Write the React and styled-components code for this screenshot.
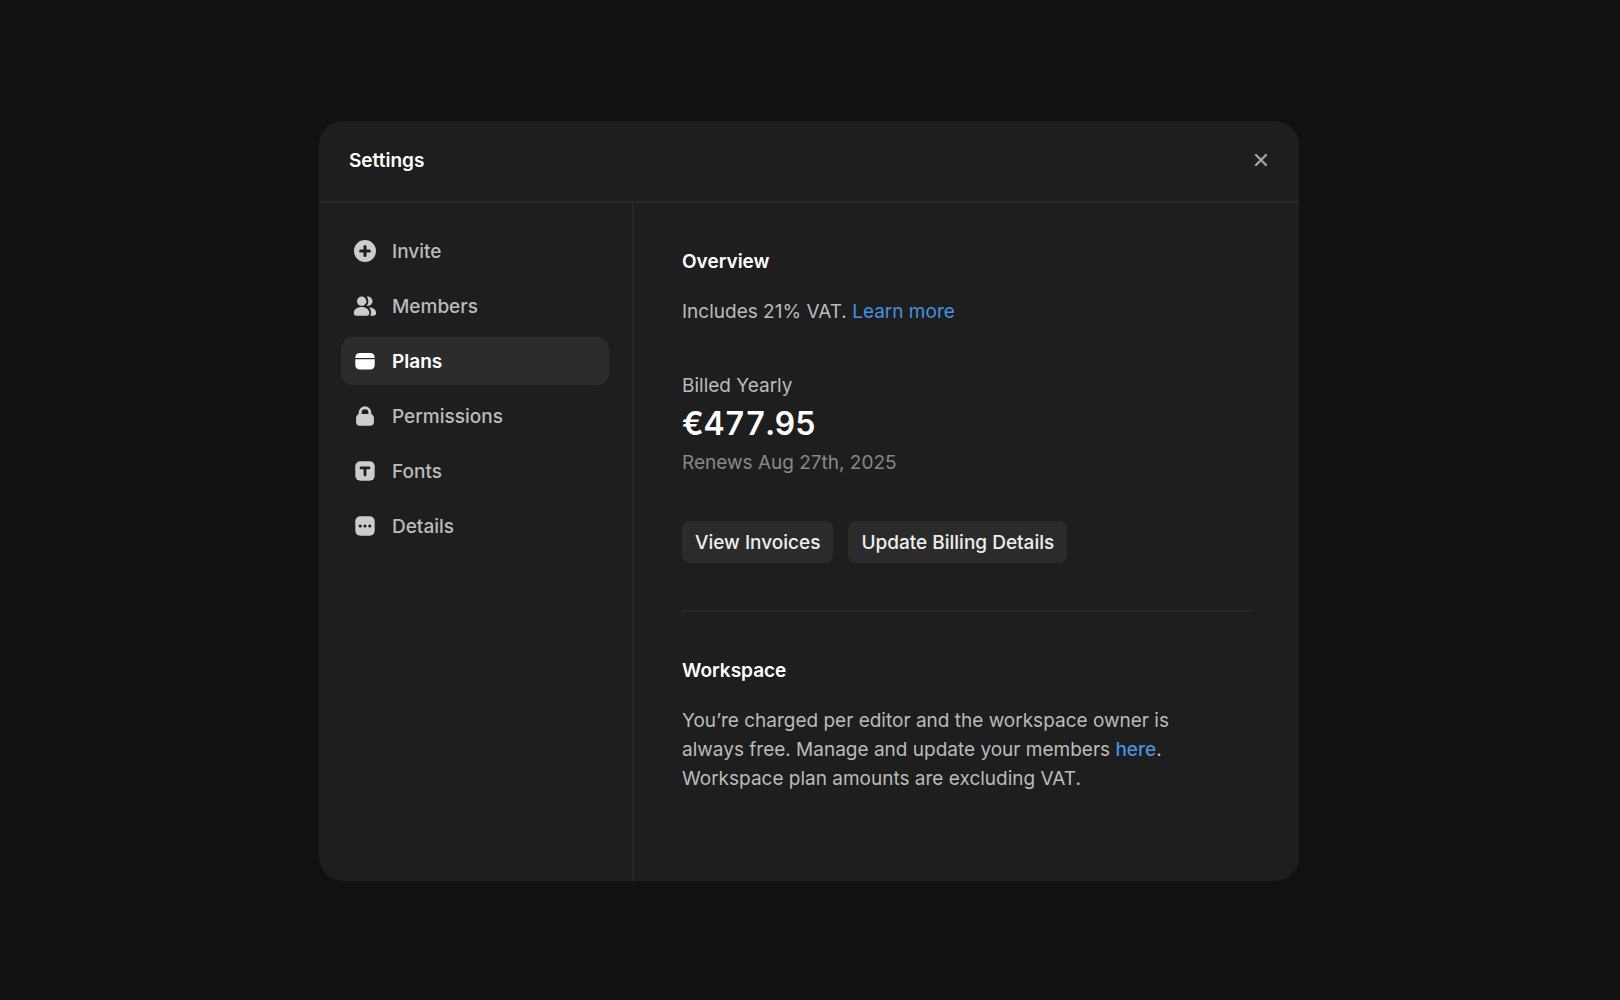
import React, { useState } from "react";
import styled, { createGlobalStyle } from "styled-components";

const GlobalStyle = createGlobalStyle`
  *, *::before, *::after { box-sizing: border-box; }
  body {
    margin: 0;
    background: #111111;
    color: #bbbbbb;
    font-family: Inter, "Liberation Sans", sans-serif;
    font-size: 19px;
    line-height: 29px;
    font-optical-sizing: none;
    -webkit-font-smoothing: antialiased;
  }
  h1, h2, p { margin: 0; }
`;

const Page = styled.main`
  min-height: 100vh;
  display: flex;
  align-items: center;
  justify-content: center;
  padding: 26px 26px 24px 24px;
`;

const Dialog = styled.section`
  display: flex;
  flex-direction: column;
  width: 100%;
  max-width: 980px;
  min-height: 760px;
  border-radius: 24px;
  background: #1e1e1e;
  overflow: hidden;
`;

const Header = styled.header`
  display: flex;
  align-items: center;
  justify-content: space-between;
  height: 82px;
  padding: 0 25px 2px 30px;
  border-bottom: 2px solid #282828;
`;

const Heading = styled.h2`
  color: #ffffff;
  font-size: 19px;
  font-weight: 600;
  line-height: 29px;
`;

const CloseButton = styled.button`
  display: flex;
  padding: 4px;
  border: 0;
  border-radius: 8px;
  background: none;
  color: #a3a3a3;
  cursor: pointer;
`;

const Body = styled.div`
  display: flex;
  flex: 1;
`;

const Sidebar = styled.nav`
  display: flex;
  flex-direction: column;
  gap: 7px;
  flex: 0 0 315px;
  padding: 24px 23px 24px 22px;
  border-right: 2px solid #282828;
`;

const NavItem = styled.button`
  display: flex;
  align-items: center;
  gap: 15px;
  height: 48px;
  padding: 0 12px;
  border: 0;
  border-radius: 12px;
  background: ${(p) => (p.$active ? "#2c2c2c" : "transparent")};
  color: ${(p) => (p.$active ? "#ffffff" : "#bbbbbb")};
  font: inherit;
  font-weight: ${(p) => (p.$active ? 600 : 500)};
  text-align: left;
  cursor: pointer;

  svg {
    flex: none;
    color: ${(p) => (p.$active ? "#ffffff" : "#cccccc")};
  }
`;

const Content = styled.div`
  flex: 1;
  min-width: 0;
  padding: 44px 47px 44px 48px;
`;

const Section = styled.section`
  display: flex;
  flex-direction: column;
  gap: 21px;
`;

const Copy = styled.p`
  max-width: 500px;
`;

const Billing = styled.div`
  display: flex;
  flex-direction: column;
  gap: 3px;
  padding: 24px 0 23px;
`;

const Price = styled.strong`
  color: #ffffff;
  font-size: 32px;
  font-weight: 600;
  font-variant-numeric: tabular-nums;
  line-height: 42px;
`;

const Muted = styled.span`
  color: #888888;
`;

const Link = styled.a`
  color: #4890e0;
  font-weight: ${(p) => (p.$strong ? 500 : 400)};
  text-decoration: none;
`;

const Actions = styled.div`
  display: flex;
  flex-wrap: wrap;
  gap: 15px;
`;

const Button = styled.button`
  height: 42px;
  padding: 0 13px;
  border: 0;
  border-radius: 8px;
  background: #2b2b2b;
  color: #eeeeee;
  font: inherit;
  font-weight: 500;
  cursor: pointer;
`;

const Divider = styled.hr`
  height: 2px;
  margin: 47px 0 44px;
  border: 0;
  background: #282828;
`;

const Icon = ({ children }) => (
  <svg width="24" height="24" viewBox="0 0 24 24" fill="currentColor" aria-hidden="true">
    {children}
  </svg>
);

const InviteIcon = () => (
  <Icon>
    <path
      fillRule="evenodd"
      d="M12 1a11 11 0 1 1 0 22a11 11 0 0 1 0-22ZM12 6.1a1.5 1.5 0 0 0-1.5 1.5v2.9H7.6a1.5 1.5 0 0 0 0 3h2.9v2.9a1.5 1.5 0 0 0 3 0v-2.9h2.9a1.5 1.5 0 0 0 0-3h-2.9V7.6A1.5 1.5 0 0 0 12 6.1Z"
    />
  </Icon>
);

const MembersIcon = () => (
  <Icon>
    <circle cx="8.7" cy="7.2" r="4.7" />
    <path d="M8.7 13.1c4.3 0 7.6 2.5 7.6 5.9c0 1.7-1 2.7-2.6 2.7H3.4C1.8 21.7.8 20.7.8 19c0-3.4 3.5-5.9 7.9-5.9Z" />
    <path d="M13.6 2.5h1.2a4.7 4.7 0 0 1 0 9.4h-1.2c1.1-1.2 1.7-2.9 1.7-4.7s-.6-3.5-1.7-4.7Z" />
    <path d="M16 13.3c4.1.2 7.1 2.5 7.1 5.7c0 1.7-1 2.7-2.6 2.7H17c.7-.7 1.1-1.6 1.1-2.7c0-2.3-.7-4.2-2.1-5.7Z" />
  </Icon>
);

const PlansIcon = () => (
  <Icon>
    <path d="M2.3 8.9C2.3 5.7 3.9 3.9 7 3.9h10c3.1 0 4.7 1.8 4.7 5ZM2.3 10.2h19.4v5.5c0 3.1-1.6 4.7-4.7 4.7H7c-3.1 0-4.7-1.6-4.7-4.7Z" />
  </Icon>
);

const PermissionsIcon = () => (
  <Icon>
    <path
      fillRule="evenodd"
      d="M5.6 10.3V8.7a6.4 6.4 0 0 1 12.8 0v1.6c1.6.5 2.5 1.7 2.5 3.6V18c0 2.5-1.4 3.8-3.8 3.8H6.9c-2.4 0-3.8-1.3-3.8-3.8v-4.1c0-1.9.9-3.1 2.5-3.6ZM8.6 9.9h6.8V8.7a3.4 3.4 0 0 0-6.8 0Z"
    />
  </Icon>
);

const FontsIcon = () => (
  <Icon>
    <rect x="2.3" y="2.3" width="19.4" height="19.4" rx="5" />
    <path d="M8 8.9h8M12 9.300v6.700" fill="none" stroke="#1e1e1e" strokeWidth="2.8" strokeLinecap="round" />
  </Icon>
);

const DetailsIcon = () => (
  <Icon>
    <rect x="2.3" y="2.3" width="19.4" height="19.4" rx="5" />
    <g fill="#1e1e1e">
      <circle cx="7.2" cy="12" r="1.6" />
      <circle cx="12" cy="12" r="1.6" />
      <circle cx="16.8" cy="12" r="1.6" />
    </g>
  </Icon>
);

const CloseIcon = () => (
  <svg width="18" height="18" viewBox="0 0 18 18" fill="none" stroke="currentColor" strokeWidth="2.4" strokeLinecap="round" aria-hidden="true">
    <path d="M4 4l10 10M14 4L4 14" />
  </svg>
);

const NAV = [
  { label: "Invite", Glyph: InviteIcon },
  { label: "Members", Glyph: MembersIcon },
  { label: "Plans", Glyph: PlansIcon },
  { label: "Permissions", Glyph: PermissionsIcon },
  { label: "Fonts", Glyph: FontsIcon },
  { label: "Details", Glyph: DetailsIcon },
];

export default function App() {
  const [active, setActive] = useState("Plans");

  return (
    <>
      <GlobalStyle />
      <Page>
        <Dialog role="dialog" aria-labelledby="settings-title">
          <Header>
            <Heading as="h1" id="settings-title">Settings</Heading>
            <CloseButton type="button" aria-label="Close">
              <CloseIcon />
            </CloseButton>
          </Header>
          <Body>
            <Sidebar aria-label="Settings">
              {NAV.map(({ label, Glyph }) => (
                <NavItem
                  key={label}
                  type="button"
                  $active={label === active}
                  aria-current={label === active ? "page" : undefined}
                  onClick={() => setActive(label)}
                >
                  <Glyph />
                  {label}
                </NavItem>
              ))}
            </Sidebar>
            <Content>
              <Section>
                <Heading>Overview</Heading>
                <Copy>
                  Includes 21% VAT. <Link href="#vat">Learn more</Link>
                </Copy>
                <Billing>
                  <span>Billed Yearly</span>
                  <Price>€477.95</Price>
                  <Muted>Renews Aug 27th, 2025</Muted>
                </Billing>
                <Actions>
                  <Button type="button">View Invoices</Button>
                  <Button type="button">Update Billing Details</Button>
                </Actions>
              </Section>
              <Divider />
              <Section>
                <Heading>Workspace</Heading>
                <Copy>
                  You’re charged per editor and the workspace owner is always free. Manage and update
                  your members <Link href="#members" $strong>here</Link>. Workspace plan amounts are
                  excluding VAT.
                </Copy>
              </Section>
            </Content>
          </Body>
        </Dialog>
      </Page>
    </>
  );
}
